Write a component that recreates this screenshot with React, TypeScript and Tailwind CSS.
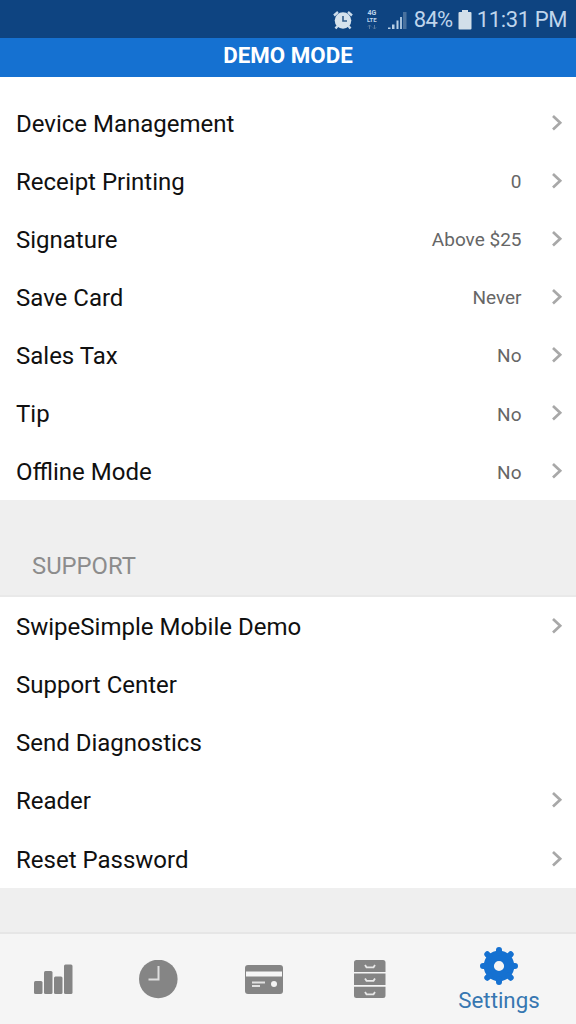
import { clsx } from 'clsx'
import type { ReactNode } from 'react'

type Item = {
    label: string
    value?: string
    arrow?: boolean
}

const settings: Item[] = [
    { label: 'Device Management', arrow: true },
    { label: 'Receipt Printing', value: '0', arrow: true },
    { label: 'Signature', value: 'Above $25', arrow: true },
    { label: 'Save Card', value: 'Never', arrow: true },
    { label: 'Sales Tax', value: 'No', arrow: true },
    { label: 'Tip', value: 'No', arrow: true },
    { label: 'Offline Mode', value: 'No', arrow: true },
]

const support: Item[] = [
    { label: 'SwipeSimple Mobile Demo', arrow: true },
    { label: 'Support Center' },
    { label: 'Send Diagnostics' },
    { label: 'Reader', arrow: true },
    { label: 'Reset Password', arrow: true },
]

function Row({ label, value, arrow }: Item) {
    return (
        <button className="flex h-[58.1px] w-full items-center pl-4 pr-[13px] text-left">
            <span className="flex-1 pt-0.5 text-[24px] leading-7 text-[#101010]">{label}</span>
            {value && <span className="mr-[29.500px] pt-[3px] text-[19px] leading-6 text-[#666666]">{value}</span>}
            {arrow && (
                <svg width="12" height="18" viewBox="0 0 12 18" fill="none" aria-hidden="true">
                    <path d="M2 2l7.200 6.800L2 15.600" stroke="#a8a8a8" strokeWidth="2.700" />
                </svg>
            )}
        </button>
    )
}

function StatusBar() {
    return (
        <div className="flex h-[38px] items-center justify-end bg-[#0e4481] pr-[9px] pt-0.5 text-[#bfd5ec]">
            {/* alarm */}
            <svg width="22" height="20" viewBox="0 0 22 20" className="mr-3" aria-hidden="true">
                <path d="M2 5.5L6 2M20 5.5L16 2M5.5 16l-2 2.5M16.500 16l2 2.500" stroke="#cbdceb" strokeWidth="2.400" />
                <circle cx="11" cy="10.500" r="8.300" fill="#d5e2ec" />
                <path d="M11 6v5h4" stroke="#325d8a" strokeWidth="1.600" fill="none" />
            </svg>
            <div className="mr-[9px] flex w-3 flex-col items-center">
                <span className="text-[7px] font-bold leading-[7px]">4G</span>
                <span className="text-[6px] font-bold leading-[6px]">LTE</span>
                <svg width="10" height="6" viewBox="0 0 10 6" className="mt-px" aria-hidden="true">
                    <path d="M2.500 5V1M1 2.500L2.500 1L4 2.500M7.500 1v4M6 3.500L7.500 5L9 3.500" stroke="#56799f" fill="none" />
                </svg>
            </div>
            <svg width="20" height="19" viewBox="0 0 20 19" className="mr-[7px]" aria-hidden="true">
                <path d="M1 16.500h2.500V18H1zM5 13.500h2.500V18H5zM9.500 9.500h2V18h-2z" fill="#b8cfe5" />
                <path d="M13 6h2v12h-2z" fill="#a3bfda" />
                <path d="M16 1h3.500v17H16z" fill="#4a729e" />
            </svg>
            <span className="w-[38px] whitespace-nowrap text-[22px] leading-6 tracking-[-0.8px]">84%</span>
            <svg width="14" height="20" viewBox="0 0 14 20" className="ml-1.5 mr-[5px]" aria-hidden="true">
                <path d="M4 0h6v2h2.500a1 1 0 0 1 1 1v15.500a1 1 0 0 1-1 1h-11a1 1 0 0 1-1-1V3a1 1 0 0 1 1-1H4z" fill="#d2dfe9" />
            </svg>
            <span className="text-[22px] leading-6 tracking-[-0.4px]">11:31 PM</span>
        </div>
    )
}

function Tab({ label, active, children }: { label: string; active?: boolean; children: ReactNode }) {
    return (
        <button
            aria-label={label}
            className={clsx(
                'flex flex-1 flex-col items-center',
                active ? 'pt-[13px] text-[#1571d1]' : 'pt-[26px] text-[#858585]'
            )}
        >
            {children}
            {active && <span className="mt-px text-[22.3px] leading-7 text-[#3777b1]">{label}</span>}
        </button>
    )
}

export default function App() {
    return (
        <div className="flex h-[1024px] w-[576px] flex-col overflow-hidden bg-[#efefef] font-['Roboto',sans-serif]">
            <StatusBar />
            <header className="flex h-[39px] items-start justify-center bg-[#1571d1] pt-1 text-[22.3px] font-bold leading-[26px] text-white">
                DEMO MODE
            </header>

            <main className="flex-1">
                <section className="bg-white pt-[16.500px]">
                    {settings.map((item) => (
                        <Row key={item.label} {...item} />
                    ))}
                </section>
                <h2 className="flex h-[97px] items-end border-b-2 border-[#e9e9e9] pb-[15px] pl-8 text-[23.8px] leading-7 text-[#8c8c8c]">
                    SUPPORT
                </h2>
                <section className="bg-white">
                    {support.map((item) => (
                        <Row key={item.label} {...item} />
                    ))}
                </section>
            </main>

            <nav className="flex h-[92px] border-t-2 border-[#e6e6e6] bg-[#f5f5f5]">
                <Tab label="Reports">
                    <svg width="40" height="40" viewBox="0 0 40 40" fill="currentColor">
                        <rect x="1" y="21" width="8.500" height="13" rx="1.500" />
                        <rect x="11" y="11" width="8.500" height="23" rx="1.500" />
                        <rect x="21" y="16.500" width="8.500" height="17.500" rx="1.500" />
                        <rect x="31" y="4.500" width="8.500" height="29.500" rx="1.500" />
                    </svg>
                </Tab>
                <Tab label="History">
                    <svg width="40" height="40" viewBox="0 0 40 40">
                        <circle cx="20.300" cy="19" r="19.300" fill="currentColor" />
                        <path d="M20.500 6v13.500H10.500" stroke="#dedede" strokeWidth="2" fill="none" />
                    </svg>
                </Tab>
                <Tab label="Charge">
                    <svg width="40" height="40" viewBox="0 0 40 40">
                        <rect x="1" y="5" width="38" height="29" rx="3" fill="currentColor" />
                        <path d="M2 11.500h36v5H2z" fill="#f5f5f5" />
                        <path d="M8 22.500h13M8 26h8" stroke="#e2e2e2" strokeWidth="1.800" />
                        <circle cx="30" cy="24" r="3" fill="#f5f5f5" />
                    </svg>
                </Tab>
                <Tab label="Register">
                    <svg width="40" height="40" viewBox="0 0 40 40">
                        <path
                            d="M7.500 0H34q2.500 0 2.500 2.500V12H5V2.500Q5 0 7.500 0zM5 13.500h31.500V25H5zM5 26.800h31.500v8.700q0 2.500-2.500 2.500H7.500Q5 38 5 35.500z"
                            fill="currentColor"
                        />
                        <path
                            d="M16 5l1.500 2.300h7L26 5M16 18.500l1.500 2.300h7l1.500-2.300M16 32l1.500 2.300h7L26 32"
                            stroke="#e8e8e8"
                            strokeWidth="1.800"
                            fill="none"
                        />
                    </svg>
                </Tab>
                <div className="flex w-[154px]">
                    <Tab label="Settings" active>
                        <svg width="40" height="38" viewBox="-20 -19 40 38">
                            <g fill="none" stroke="currentColor" strokeLinecap="round">
                                <circle r="10.200" strokeWidth="10.200" />
                                <path
                                    d="M0-13v-3M0 13v3M-13 0h-3M13 0h3M-9.500-9.500l-2.200-2.200M9.500-9.500l2.200-2.200M-9.500 9.500l-2.200 2.200M9.500 9.500l2.200 2.200"
                                    strokeWidth="6"
                                />
                            </g>
                        </svg>
                    </Tab>
                </div>
            </nav>
        </div>
    )
}
